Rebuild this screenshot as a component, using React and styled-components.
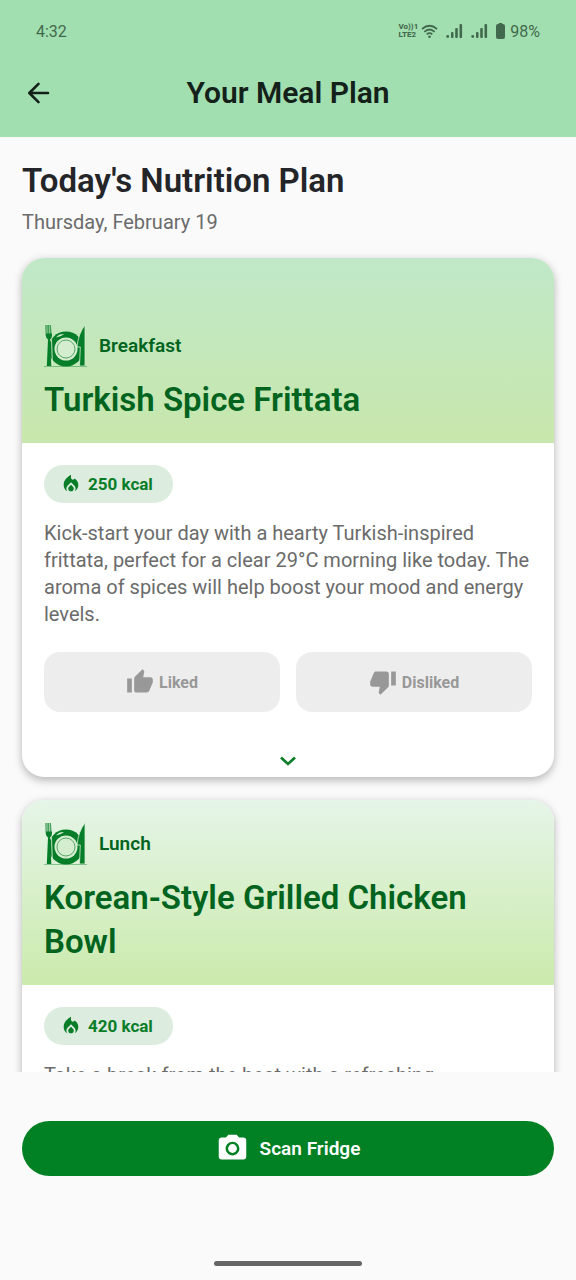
import React from "react";
import styled, { createGlobalStyle } from "styled-components";
import { MdLocalFireDepartment, MdPhotoCamera, MdThumbDown, MdThumbUp } from "react-icons/md";

const GlobalStyle = createGlobalStyle`
  *, *::before, *::after { box-sizing: border-box; }
  body { margin: 0; background: #fafafa; font-family: Roboto, "Liberation Sans", sans-serif; }
  h1, h2, h3, p { margin: 0; }
  button { font: inherit; border: 0; cursor: pointer; }
  svg { display: block; flex: none; }
`;

const Screen = styled.div`
  display: flex;
  flex-direction: column;
  height: 100vh;
  background: #fafafa;
`;

const TopArea = styled.header`
  background: #a2dfb0;
`;

const StatusBar = styled.div`
  display: flex;
  align-items: center;
  justify-content: space-between;
  height: 62px;
  padding: 0 36px;
  color: #42694d;
  font-size: 16px;
`;

const StatusIcons = styled.div`
  display: flex;
  align-items: center;
  gap: ${(p) => p.$gap}px;
`;

const Network = styled.span`
  font-size: 8px;
  line-height: 8px;
  font-weight: 800;
  white-space: pre;
`;

const AppBar = styled.div`
  display: grid;
  grid-template-columns: 44px 1fr 44px;
  align-items: center;
  height: 75px;
  padding: 0 16px 14px;
`;

const BackButton = styled.button`
  display: grid;
  place-items: center;
  height: 44px;
  padding: 0;
  background: none;
  color: #14211a;
`;

const BarTitle = styled.h1`
  color: #14211a;
  font-size: 30px;
  line-height: 36px;
  font-weight: 600;
  text-align: center;
`;

const Scroller = styled.main`
  flex: 1;
  min-height: 0;
  overflow-y: auto;
  scrollbar-width: none;
  padding: 22px 22px 0;
`;

const PlanTitle = styled.h2`
  color: #242528;
  font-size: 33px;
  line-height: 44px;
  font-weight: 600;
`;

const PlanDate = styled.p`
  margin: 5px 0 22px;
  color: #6b6b6b;
  font-size: 20px;
  line-height: 28px;
`;

const MealList = styled.div`
  display: flex;
  flex-direction: column;
  gap: 23px;
`;

const Card = styled.article`
  overflow: hidden;
  border-radius: 22px;
  background: #fff;
  box-shadow: 0 4px 9px rgba(0, 0, 0, 0.22), 0 0 8px rgba(0, 0, 0, 0.08);
`;

const CardHead = styled.div`
  display: flex;
  flex-direction: column;
  justify-content: flex-end;
  gap: 11px;
  min-height: 185px;
  padding: 22px 22px 21px;
  background: linear-gradient(${(p) => (p.$active ? "#c0e8c8, #c8e7ac" : "#e5f5e8, #cbeaac")});
`;

const MealType = styled.div`
  display: flex;
  align-items: center;
  gap: 11px;
  color: #00641e;
  font-size: 19px;
  line-height: 22px;
  font-weight: 600;
`;

const MealName = styled.h3`
  color: #00641e;
  font-size: 33px;
  line-height: 44px;
  font-weight: 600;
`;

const CardBody = styled.div`
  padding: 22px 22px ${(p) => (p.$active ? 0 : 22)}px;
`;

const Chip = styled.span`
  display: inline-flex;
  align-items: center;
  gap: 6px;
  height: 38px;
  padding: 0 20px 0 16px;
  border-radius: 19px;
  background: #dcecdf;
  color: #0a7d28;
  font-size: 17px;
  font-weight: 700;
  vertical-align: top;
`;

const Description = styled.p`
  margin-top: 17px;
  color: #6b6b6b;
  font-size: 20px;
  line-height: 27px;
`;

const Feedback = styled.div`
  display: grid;
  grid-template-columns: 1fr 1fr;
  gap: 16px;
  margin-top: 24px;
`;

const FeedbackButton = styled.button`
  display: flex;
  align-items: center;
  justify-content: center;
  gap: 5px;
  height: 60px;
  border-radius: 16px;
  background: #ededed;
  color: #989898;
  font-size: 16px;
  font-weight: 700;
`;

const ExpandButton = styled.button`
  display: flex;
  justify-content: center;
  width: 100%;
  height: 65px;
  padding: 44px 0 0;
  background: none;
  color: #0a7d28;
`;

const BottomArea = styled.footer`
  display: flex;
  flex-direction: column;
  align-items: center;
  gap: 85px;
  padding: 49px 22px 14px;
`;

const ScanButton = styled.button`
  display: flex;
  align-items: center;
  justify-content: center;
  gap: 11px;
  width: 100%;
  height: 55px;
  border-radius: 28px;
  background: #028024;
  color: #fff;
  font-size: 19px;
  font-weight: 600;
`;

const HomeIndicator = styled.div`
  width: 148px;
  height: 5px;
  border-radius: 3px;
  background: #666;
`;

function WifiIcon() {
  return (
    <svg width="17" height="15" viewBox="0 0 17 15" fill="none" stroke="currentColor" strokeWidth="1.7" aria-hidden="true">
      <path d="M1 5Q8.500-1.500 16 5M3.300 7.800Q8.500 3.200 13.700 7.800M5.700 10.400Q8.500 8 11.300 10.400" />
      <circle cx="8.500" cy="12.800" r="1.300" fill="currentColor" stroke="none" />
    </svg>
  );
}

function SignalIcon() {
  return (
    <svg width="17" height="14" viewBox="0 0 17 14" fill="currentColor" aria-hidden="true">
      <circle cx="1.700" cy="12.500" r="1.400" />
      <rect x="5" y="8" width="2.500" height="6" rx="1" />
      <rect x="9.200" y="4" width="2.600" height="10" rx="1" />
      <rect x="13.500" y="0" width="2.600" height="14" rx="1" />
    </svg>
  );
}

function BatteryIcon() {
  return (
    <svg width="9" height="16" viewBox="0 0 9 16" fill="currentColor" aria-hidden="true">
      <rect x="2.500" width="4" height="3" rx="1" />
      <rect y="1" width="9" height="15" rx="2" />
    </svg>
  );
}

function BackIcon() {
  return (
    <svg width="24" height="24" viewBox="0 0 24 24" fill="none" stroke="currentColor" strokeWidth="2.600" strokeLinecap="round" strokeLinejoin="round" aria-hidden="true">
      <path d="M22 12H3.500M12.500 2.800L3.300 12L12.500 21.200" />
    </svg>
  );
}

function ChevronIcon() {
  return (
    <svg width="16" height="10" viewBox="0 0 16 10" fill="none" stroke="currentColor" strokeWidth="2.600" aria-hidden="true">
      <path d="M1 1.500L8 8L15 1.500" />
    </svg>
  );
}

function PlateIcon() {
  return (
    <svg width="44" height="42" viewBox="0 0 44 42" aria-hidden="true">
      <g fill="#067d28">
        <circle cx="22" cy="24" r="17.500" />
        <path d="M1.500 0h1v8.500h1V0h1.200v8.500h1V0h1v8.500h.8V1L8 10.500Q8 13 6 14.500L7.300 41H2.800L4 14.500Q2 13 1.700 10.500Z" />
        <path d="M41 0V41H35.500L36.300 22H33Q34.500 8 41 0Z" stroke="#d5edcf" strokeWidth="0.800" />
        <rect x="0" y="41" width="43" height="1" opacity="0.400" />
      </g>
      <circle cx="22" cy="24" r="11.500" fill="#d5edcf" />
      <circle cx="22" cy="24" r="9" fill="none" stroke="#59a669" strokeWidth="1" />
      <path d="M12 12.500Q15 8.800 20 9.100Q17 12 12 12.500Z" fill="#d5edcf" />
      <path d="M7.500 14.500L8.500 41" fill="none" stroke="#d5edcf" strokeWidth="0.900" />
    </svg>
  );
}

function MealCard({ type, name, calories, description, active }) {
  return (
    <Card>
      <CardHead $active={active}>
        <MealType>
          <PlateIcon />
          {type}
        </MealType>
        <MealName>{name}</MealName>
      </CardHead>
      <CardBody $active={active}>
        <Chip>
          <MdLocalFireDepartment size={22} aria-hidden="true" />
          {calories} kcal
        </Chip>
        <Description>{description}</Description>
        {active && (
          <>
            <Feedback>
              <FeedbackButton type="button">
                <MdThumbUp size={28} aria-hidden="true" />
                Liked
              </FeedbackButton>
              <FeedbackButton type="button">
                <MdThumbDown size={28} aria-hidden="true" />
                Disliked
              </FeedbackButton>
            </Feedback>
            <ExpandButton type="button" aria-label="Show details">
              <ChevronIcon />
            </ExpandButton>
          </>
        )}
      </CardBody>
    </Card>
  );
}

export default function App() {
  return (
    <Screen>
      <GlobalStyle />
      <TopArea>
        <StatusBar>
          <span>4:32</span>
          <StatusIcons $gap={8}>
            <StatusIcons $gap={3}>
              <Network>{"Vo))1\nLTE2"}</Network>
              <WifiIcon />
            </StatusIcons>
            <SignalIcon />
            <SignalIcon />
            <StatusIcons $gap={5}>
              <BatteryIcon />
              <span>98%</span>
            </StatusIcons>
          </StatusIcons>
        </StatusBar>
        <AppBar>
          <BackButton type="button" aria-label="Back">
            <BackIcon />
          </BackButton>
          <BarTitle>Your Meal Plan</BarTitle>
        </AppBar>
      </TopArea>
      <Scroller>
        <PlanTitle>Today's Nutrition Plan</PlanTitle>
        <PlanDate>Thursday, February 19</PlanDate>
        <MealList>
          <MealCard
            active
            type="Breakfast"
            name="Turkish Spice Frittata"
            calories={250}
            description="Kick-start your day with a hearty Turkish-inspired frittata, perfect for a clear 29°C morning like today. The aroma of spices will help boost your mood and energy levels."
          />
          <MealCard
            type="Lunch"
            name="Korean-Style Grilled Chicken Bowl"
            calories={420}
            description="Take a break from the heat with a refreshing"
          />
        </MealList>
      </Scroller>
      <BottomArea>
        <ScanButton type="button">
          <MdPhotoCamera size={33} aria-hidden="true" />
          Scan Fridge
        </ScanButton>
        <HomeIndicator />
      </BottomArea>
    </Screen>
  );
}
